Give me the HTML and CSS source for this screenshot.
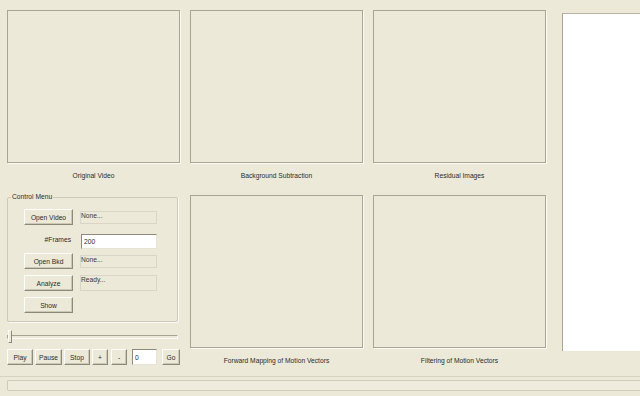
FILE: index.html
```html
<!DOCTYPE html>
<html lang="en">
<head>
    <meta charset="UTF-8">
    <title>Motion Vectors</title>
    <link rel="stylesheet" href="styles.css">
</head>
<body>
    <div class="main">
        <div class="views">
            <!-- Linha de cima -->
            <div class="view">
                <div class="screen"></div>
                <div class="caption">Original Video</div>
            </div>
            <div class="view">
                <div class="screen"></div>
                <div class="caption">Background Subtraction</div>
            </div>
            <div class="view">
                <div class="screen"></div>
                <div class="caption">Residual Images</div>
            </div>

            <!-- Menu de controle -->
            <div class="control">
                <fieldset class="group">
                    <legend>Control Menu</legend>
                    <div class="form">
                        <button class="btn wide">Open Video</button>
                        <div class="field">None...</div>

                        <label class="label">#Frames</label>
                        <input class="text frames" type="text" value="200">

                        <button class="btn wide">Open Bkd</button>
                        <div class="field">None...</div>

                        <button class="btn wide">Analyze</button>
                        <div class="field tall">Ready...</div>

                        <button class="btn wide">Show</button>
                    </div>
                </fieldset>

                <div class="slider">
                    <div class="track"></div>
                    <div class="thumb"></div>
                </div>

                <div class="player">
                    <button class="btn play">Play</button>
                    <button class="btn pause">Pause</button>
                    <button class="btn stop">Stop</button>
                    <button class="btn step">+</button>
                    <button class="btn step minus">-</button>
                    <input class="text frame" type="text" value="0">
                    <button class="btn go">Go</button>
                </div>
            </div>

            <div class="view low">
                <div class="screen"></div>
                <div class="caption">Forward Mapping of Motion Vectors</div>
            </div>
            <div class="view low">
                <div class="screen"></div>
                <div class="caption">Filtering of Motion Vectors</div>
            </div>
        </div>

        <div class="side"></div>
    </div>

    <div class="statusbar">
        <div class="progress"></div>
    </div>
</body>
</html>
```

FILE: styles.css
```css
/* Estilo Global */
body {
    margin: 0;
    width: 640px;
    height: 396px;
    overflow: hidden;
    background: #ece9d8;
    font-family: "Liberation Sans", Arial, sans-serif;
    font-size: 6.7px;
    color: #2b2b2b;
}

.main {
    display: flex;
    padding: 10px 0 0 7px;
}

.views {
    display: grid;
    grid-template-columns: repeat(3, 173px);
    grid-template-rows: 183px auto;
    column-gap: 10px;
}

.screen {
    height: 153px;
    box-sizing: border-box;
    border: 1px solid #a9a595;
    box-shadow: 1px 1px 0 #fbfaf5;
}

.caption {
    text-align: center;
    padding-top: 8px;
    line-height: 9px;
}

.view.low {
    padding-top: 2px;
}

/* Menu de controle */
.group {
    width: 171px;
    box-sizing: border-box;
    margin: 0;
    padding: 5px 0 5px 0;
    border: 1px solid #cdc9b8;
    border-radius: 2px;
    box-shadow: 1px 1px 0 #fbfaf5;
}

.group legend {
    padding: 0 1px;
    margin-left: 3px;
    line-height: 8px;
}

.form {
    display: grid;
    grid-template-columns: 49px 77px;
    grid-auto-rows: 22px;
    column-gap: 7px;
    align-items: center;
    padding-left: 16px;
}

.btn {
    height: 16px;
    padding: 0;
    box-sizing: border-box;
    background: #ece9d8;
    border: 1px solid;
    border-color: #fdfdfa #8d8a7c #8d8a7c #fdfdfa;
    box-shadow: inset -1px -1px 0 #cbc8b8;
    font-family: inherit;
    font-size: 6.7px;
    color: #2b2b2b;
}

.btn.wide {
    width: 49px;
}

.field {
    height: 13px;
    box-sizing: border-box;
    border: 1px solid #d9d6c7;
    line-height: 8px;
    color: #3a3a3a;
    align-self: start;
    margin-top: 5px;
}

.field.tall {
    height: 16px;
    margin-top: 3px;
}

.label {
    text-align: right;
    padding-right: 2px;
}

.text {
    height: 15px;
    box-sizing: border-box;
    padding: 0 2px;
    background: #fff;
    border: 1px solid;
    border-color: #8d8a7c #e6e3d6 #e6e3d6 #8d8a7c;
    font-family: inherit;
    font-size: 6.7px;
    color: #2b2b2b;
}

.frames {
    width: 76px;
    margin: 4px 0 0 1px;
}

/* Barra de posição */
.slider {
    position: relative;
    width: 171px;
    height: 13px;
    margin-top: 8px;
    display: flex;
    align-items: center;
}

.track {
    width: 100%;
    height: 4px;
    box-sizing: border-box;
    border: 1px solid;
    border-color: #a9a595 #fbfaf5 #fbfaf5 #a9a595;
}

.thumb {
    position: absolute;
    left: 1px;
    top: 0;
    width: 4px;
    height: 13px;
    box-sizing: border-box;
    background: #ece9d8;
    border: 1px solid;
    border-color: #fdfdfa #8d8a7c #8d8a7c #fdfdfa;
}

.player {
    display: flex;
    gap: 2px;
    margin-top: 6px;
}

.play { width: 26px; }
.pause { width: 27px; }
.stop { width: 26px; }
.step { width: 16px; }
.minus { margin-left: 1px; }
.go { width: 18px; margin-left: 3px; }

.frame {
    width: 25px;
    height: 16px;
    margin-left: 3px;
}

/* Painel lateral */
.side {
    width: 78px;
    height: 338px;
    margin: 3px 0 0 16px;
    box-sizing: border-box;
    background: #fff;
    border-top: 1px solid #b5b2a3;
    border-left: 1px solid #a9a595;
}

.statusbar {
    margin-top: 11px;
    padding: 3px 0 0 7px;
    border-top: 1px solid #d6d2c2;
}

.progress {
    height: 11px;
    box-sizing: border-box;
    border: 1px solid #cfcbb9;
    border-right: none;
    border-radius: 2px 0 0 2px;
    background: #efecde;
}
```
